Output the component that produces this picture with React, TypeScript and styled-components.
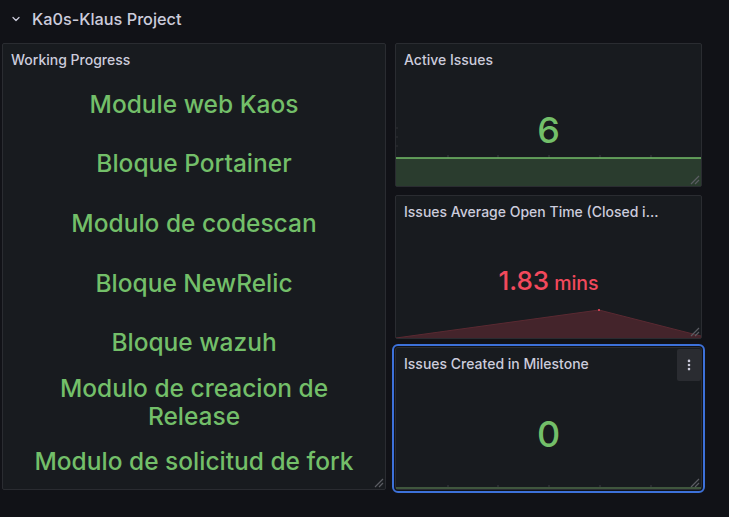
import React from "react";
import styled, { createGlobalStyle } from "styled-components";
import { ChevronDown, EllipsisVertical } from "lucide-react";

const Global = createGlobalStyle`
  html, body { margin: 0; padding: 0; background: #111217; }
  body { font-family: Inter, "Noto Sans", sans-serif; color: #ccccdc; }
  * { box-sizing: border-box; }
`;

const Page = styled.div`
  width: 729px;
  height: 517px;
  background: #111217;
  overflow: hidden;
`;

const RowHeader = styled.div`
  height: 43px;
  display: flex;
  align-items: center;
  gap: 10px;
  padding: 0 0 5px 10px;
  color: #ccccdc;
  font-size: 16.3px;
  font-weight: 500;
  svg { color: #ccccdc; }
`;

const Grid = styled.div`
  display: grid;
  grid-template-columns: 384px 307px;
  grid-template-rows: 144px 144px 143px;
  column-gap: 9px;
  row-gap: 8px;
  padding-left: 2px;
`;

const Panel = styled.div<{ $span?: number; $selected?: boolean }>`
  position: relative;
  display: flex;
  flex-direction: column;
  background: #181b1f;
  border: 1px solid #2a2c31;
  border-radius: 2px;
  grid-row: ${(p) => (p.$span ? `span ${p.$span}` : "auto")};
  ${(p) =>
    p.$selected &&
    `
    outline: 2px solid #3d71d9;
    outline-offset: 1px;
    border-radius: 3px;
  `}
`;

const PanelHeader = styled.div`
  height: 30px;
  flex: none;
  display: flex;
  align-items: center;
  padding: 1px 8px 0;
  font-size: 14px;
  font-weight: 500;
  color: #ccccdc;
  white-space: nowrap;
`;

const MenuButton = styled.div`
  position: absolute;
  top: 1px;
  right: 0;
  width: 24px;
  height: 32px;
  display: flex;
  align-items: center;
  justify-content: center;
  background: #2a2c31;
  border-radius: 2px;
  color: #ccccdc;
`;

const ItemList = styled.div`
  flex: 1;
  display: flex;
  flex-direction: column;
  margin: 0 0 -2px;
  padding: 0 8px;
`;

const Item = styled.div`
  flex: 1;
  display: flex;
  align-items: center;
  justify-content: center;
  text-align: center;
  color: #73bf69;
  font-size: 24.5px;
  font-weight: 500;
  line-height: 28px;
`;

const Body = styled.div`
  position: relative;
  flex: 1;
  display: flex;
  align-items: center;
  justify-content: center;
  overflow: hidden;
`;

const Value = styled.div<{ $color: string; $size: number; $shift?: number }>`
  position: relative;
  z-index: 1;
  color: ${(p) => p.$color};
  font-size: ${(p) => p.$size}px;
  font-weight: 500;
  line-height: 1;
  display: flex;
  align-items: baseline;
  gap: 5px;
  margin-bottom: ${(p) => p.$shift ?? 0}px;
`;

const Unit = styled.span`
  font-size: 19.5px;
`;

const Spark = styled.svg`
  position: absolute;
  left: 0;
  bottom: 0;
  width: 100%;
  display: block;
`;

const Resize = styled.svg`
  position: absolute;
  right: 1px;
  bottom: 1px;
  z-index: 2;
`;

const ResizeHandle = () => (
  <Resize width="10" height="10" viewBox="0 0 10 10">
    <path d="M1 9 L9 1 M5 9 L9 5" stroke="#5b5d63" strokeWidth="1.2" fill="none" />
  </Resize>
);

const ticks = [52, 102, 153, 204, 255];

const items = [
  "Module web Kaos",
  "Bloque Portainer",
  "Modulo de codescan",
  "Bloque NewRelic",
  "Bloque wazuh",
  "Modulo de creacion de Release",
  "Modulo de solicitud de fork",
];

export default function App() {
  return (
    <Page>
      <Global />
      <RowHeader>
        <ChevronDown size={12} strokeWidth={2.5} />
        <span>Ka0s-Klaus Project</span>
      </RowHeader>
      <Grid>
        <Panel $span={3}>
          <PanelHeader>Working Progress</PanelHeader>
          <ItemList>
            {items.map((t) => (
              <Item key={t}>
                {t === "Modulo de creacion de Release" ? (
                  <span>
                    Modulo de creacion de
                    <br />
                    Release
                  </span>
                ) : (
                  t
                )}
              </Item>
            ))}
          </ItemList>
          <ResizeHandle />
        </Panel>

        <Panel>
          <PanelHeader>Active Issues</PanelHeader>
          <Body>
            <Spark height="112" viewBox="0 0 305 112" preserveAspectRatio="none">
              <rect x="0" y="84" width="305" height="28" fill="#2a3c2e" />
              {ticks.map((x) => (
                <line key={x} x1={x} y1="81" x2={x} y2="84" stroke="#3a3d42" strokeWidth="1" />
              ))}
              {[54, 63, 72].map((y) => (
                <line key={y} x1="0" y1={y} x2="2" y2={y} stroke="#2e3035" strokeWidth="1" />
              ))}
              <line x1="0" y1="84" x2="305" y2="84" stroke="#73bf69" strokeWidth="1.5" />
            </Spark>
            <Value $color="#73bf69" $size={36}>6</Value>
          </Body>
          <ResizeHandle />
        </Panel>

        <Panel>
          <PanelHeader>Issues Average Open Time (Closed i...</PanelHeader>
          <Body>
            <Spark height="112" viewBox="0 0 305 112" preserveAspectRatio="none">
              <polygon points="0,112 203,84 305,110 305,112" fill="#44242b" />
              <polyline points="0,112 203,84 305,110" fill="none" stroke="#5a2a32" strokeWidth="1" />
              <circle cx="203" cy="84" r="1" fill="#f2495c" />
            </Spark>
            <Value $color="#f2495c" $size={26} $shift={3}>
              1.83<Unit>mins</Unit>
            </Value>
          </Body>
          <ResizeHandle />
        </Panel>

        <Panel $selected>
          <PanelHeader>Issues Created in Milestone</PanelHeader>
          <MenuButton>
            <EllipsisVertical size={14} strokeWidth={2.5} />
          </MenuButton>
          <Body>
            <Spark height="111" viewBox="0 0 305 111" preserveAspectRatio="none">
              {ticks.map((x) => (
                <line key={x} x1={x} y1="107" x2={x} y2="109" stroke="#3a3d42" strokeWidth="1" />
              ))}
              <line x1="0" y1="110" x2="305" y2="110" stroke="#4c6b48" strokeWidth="1.5" />
            </Spark>
            <Value $color="#73bf69" $size={36}>0</Value>
          </Body>
          <ResizeHandle />
        </Panel>
      </Grid>
    </Page>
  );
}
